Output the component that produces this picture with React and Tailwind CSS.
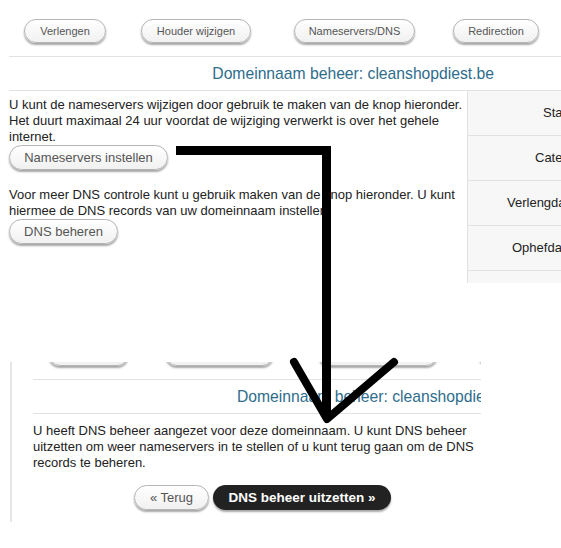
const TopBtn = ({ children, className }) => (
  <div
    className={`h-[24px] shrink-0 rounded-full border border-[#b5b5b5] bg-gradient-to-b from-white to-[#f1f1f1] shadow-[0_2px_2px_rgba(0,0,0,0.35)] flex items-center justify-center text-[11px] text-[#555] ${className}`}
  >
    {children}
  </div>
);

const Btn = ({ children, className }) => (
  <div
    className={`h-[25px] rounded-full border border-[#b5b5b5] bg-gradient-to-b from-white to-[#f1f1f1] shadow-[0_2px_2px_rgba(0,0,0,0.35)] flex items-center justify-center text-[13px] text-[#555] ${className}`}
  >
    {children}
  </div>
);

const Row = ({ children, className }) => (
  <div className={`h-[45px] shrink-0 border-b border-[#e2e2e2] flex items-center whitespace-nowrap ${className}`}>
    {children}
  </div>
);

export default function App() {
  return (
    <div className="relative w-[561px] h-[548px] overflow-hidden bg-white font-['Liberation_Sans',Arial,sans-serif] text-[#222]">
      {/* Top screenshot */}
      <div className="flex flex-col">
        <div className="flex h-[56px] pt-[19px]">
          <TopBtn className="ml-[24px] w-[82px]">Verlengen</TopBtn>
          <TopBtn className="ml-[35px] w-[110px]">Houder wijzigen</TopBtn>
          <TopBtn className="ml-[43px] w-[121px]">Nameservers/DNS</TopBtn>
          <TopBtn className="ml-[38px] w-[86px]">Redirection</TopBtn>
        </div>
        <div className="ml-[9px] h-[34px] border-t border-[#e2e2e2] flex items-center justify-end pr-[67px] text-[15.7px] text-[#2e6d8c] whitespace-nowrap">
          Domeinnaam beheer: cleanshopdiest.be
        </div>
        <div className="ml-[9px] border-t border-[#e2e2e2] flex">
          <div className="w-[458px] pt-[6px] text-[13px] leading-[16px] whitespace-nowrap">
            <p>
              U kunt de nameservers wijzigen door gebruik te maken van de knop hieronder.
              <br />
              Het duurt maximaal 24 uur voordat de wijziging verwerkt is over het gehele
              <br />
              internet.
            </p>
            <Btn className="w-[159px]">Nameservers instellen</Btn>
            <p className="mt-[17px]">
              Voor meer DNS controle kunt u gebruik maken van de knop hieronder. U kunt
              <br />
              hiermee de DNS records van uw domeinnaam instellen.
            </p>
            <Btn className="w-[109px]">DNS beheren</Btn>
          </div>
          <div className="flex-1 h-[192px] overflow-hidden border-l border-[#e2e2e2] bg-[#f7f7f7] flex flex-col text-[13px]">
            <Row className="pl-[75px]">Status</Row>
            <Row className="pl-[67px]">Categorie</Row>
            <Row className="pl-[39px]">Verlengdatum</Row>
            <Row className="pl-[44px]">Ophefdatum</Row>
          </div>
        </div>
      </div>

      {/* Bottom screenshot */}
      <div className="mt-[79px] ml-[10px] w-[475px] h-[160px] border-l-2 border-[#e6e6e6] pl-[21px]">
        <div className="w-[448px] overflow-hidden">
          <div className="h-[17px] overflow-hidden">
            <div className="flex -mt-[20px]">
              <TopBtn className="ml-[15px] w-[81px]">Verlengen</TopBtn>
              <TopBtn className="ml-[36px] w-[109px]">Houder wijzigen</TopBtn>
              <TopBtn className="ml-[44px] w-[120px]">Nameservers/DNS</TopBtn>
              <TopBtn className="ml-[40px] w-[86px]">Redirection</TopBtn>
            </div>
          </div>
          <div className="h-[34px] border-t border-[#e2e2e2] flex items-center pl-[204px] text-[15.7px] text-[#2e6d8c] whitespace-nowrap overflow-hidden">
            Domeinnaam beheer: cleanshopdiest.be
          </div>
          <div className="border-t border-[#e2e2e2] pt-[9px] text-[13px] leading-[16px] whitespace-nowrap">
            <p>
              U heeft DNS beheer aangezet voor deze domeinnaam. U kunt DNS beheer
              <br />
              uitzetten om weer nameservers in te stellen of u kunt terug gaan om de DNS
              <br />
              records te beheren.
            </p>
            <div className="flex mt-[14px] pb-[4px]">
              <Btn className="ml-[101px] w-[75px]">« Terug</Btn>
              <div className="ml-[4px] w-[178px] h-[25px] rounded-full bg-[#222] shadow-[0_2px_2px_rgba(0,0,0,0.35)] flex items-center justify-center text-[13.5px] font-bold text-white">
                DNS beheer uitzetten »
              </div>
            </div>
          </div>
        </div>
      </div>

      {/* Drawn arrow overlay */}
      <svg
        className="absolute left-0 top-0 pointer-events-none"
        width="561"
        height="548"
        viewBox="0 0 561 548"
      >
        <rect x="176" y="146" width="155" height="9" fill="#000" />
        <rect x="322" y="146" width="9" height="270" fill="#000" />
        <polyline
          points="294,362 327,419 394,362"
          fill="none"
          stroke="#000"
          strokeWidth="8"
          strokeLinejoin="round"
          strokeLinecap="round"
        />
      </svg>
    </div>
  );
}
